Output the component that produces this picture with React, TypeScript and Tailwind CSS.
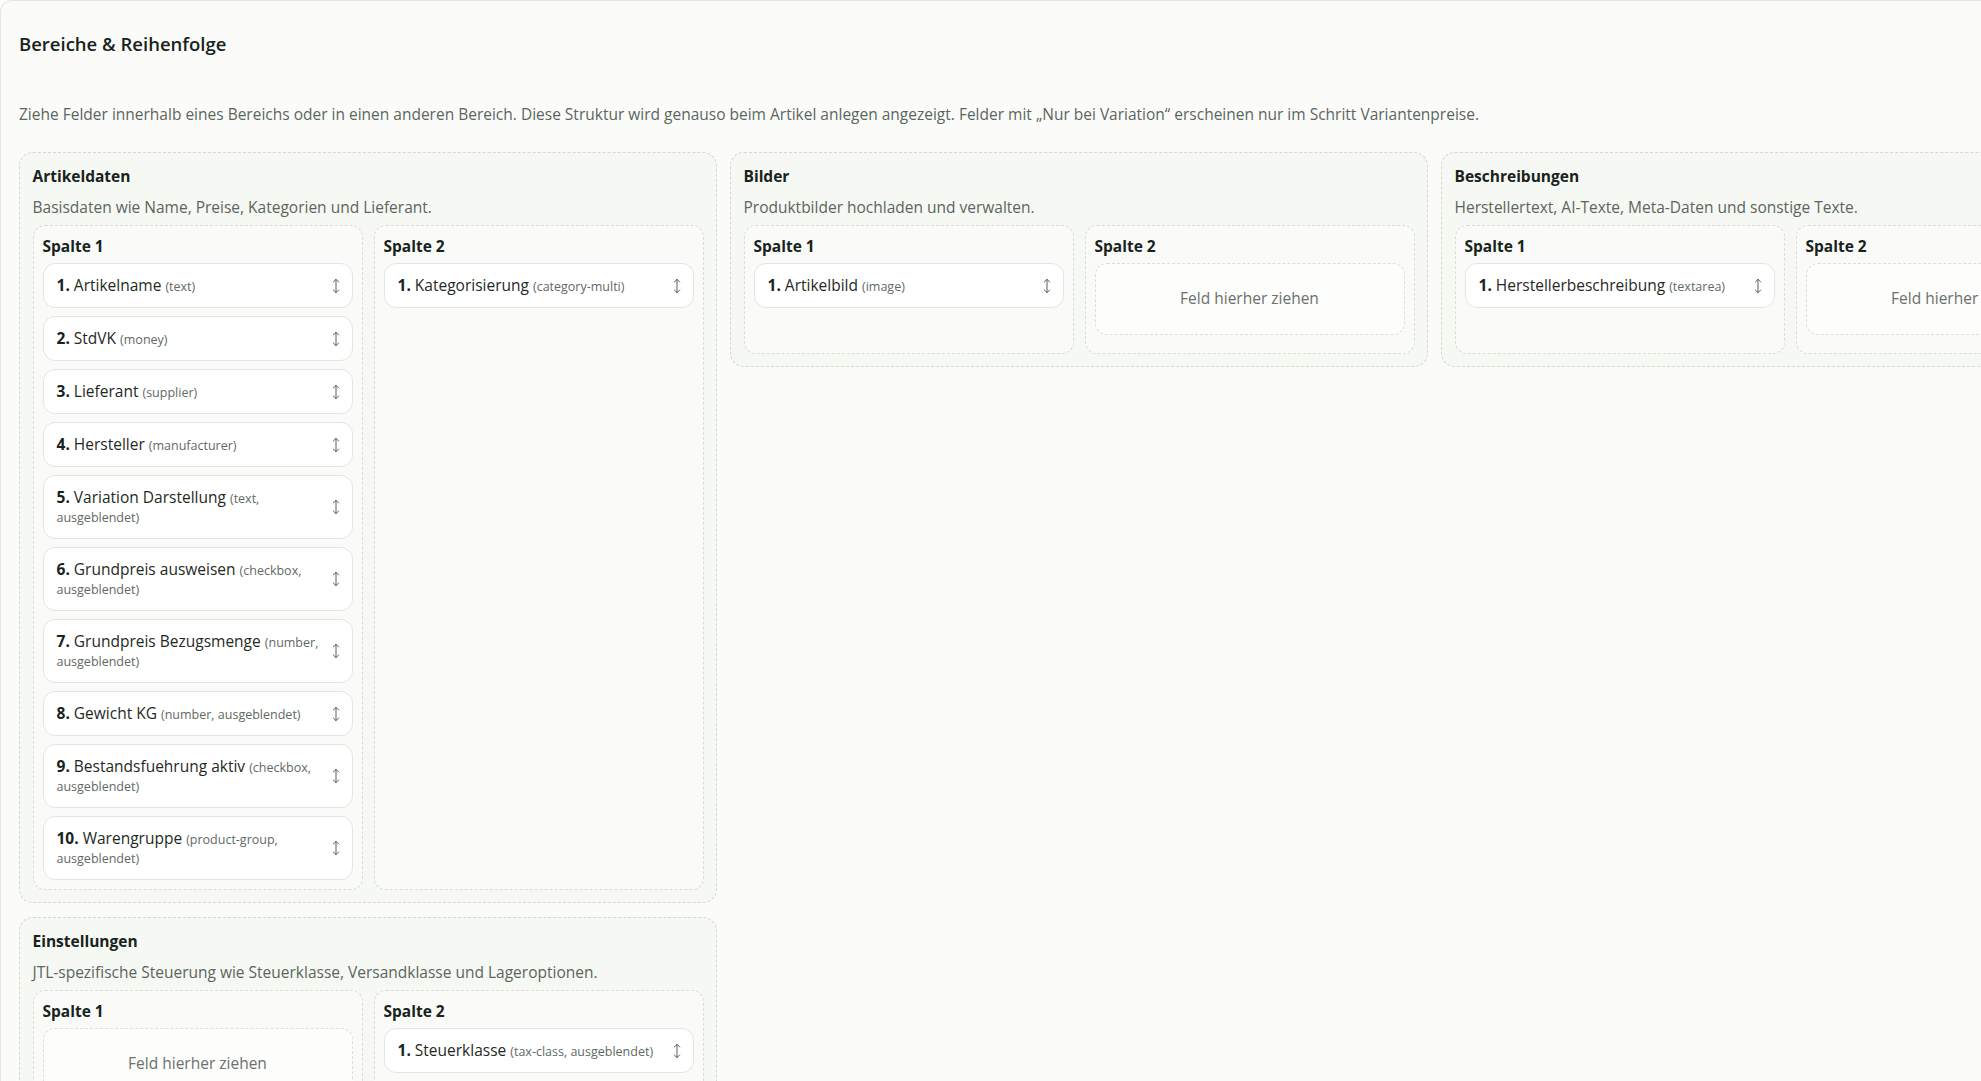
import React from "react";
import { MoveVertical } from "lucide-react";

type Field = { name: string; type: string };

const FieldItem = ({ n, f }: { n: number; f: Field }) => (
  <div className="flex items-center gap-2 rounded-[12px] border border-[#e3e6e0] bg-white pl-[13px] pr-[8px] py-[12px]">
    <div className="flex-1 text-[15.5px] leading-[19px] text-[#1f2a24]">
      <span className="font-bold text-[#17231c]">{n}.</span> {f.name}{" "}
      <span className="text-[12.5px] leading-none text-[#5f6a64]">({f.type})</span>
    </div>
    <MoveVertical size={16} strokeWidth={1.5} className="shrink-0 text-[#59605c]" />
  </div>
);

const Placeholder = () => (
  <div className="mb-[9px] flex h-[72px] items-center justify-center rounded-[12px] border border-dashed border-[#dcdfd8] bg-[#fdfdfc] text-[15.5px] text-[#6a716d]">
    Feld hierher ziehen
  </div>
);

const Column = ({ label, fields }: { label: string; fields: Field[] }) => (
  <div className="rounded-[12px] border border-dashed border-[#d9ddd4] bg-[#fafbf8] px-[9px] pt-[10px] pb-[9px]">
    <div className="mb-[7px] text-[15.5px] font-bold leading-[20px] text-[#17231c]">{label}</div>
    {fields.length === 0 ? (
      <Placeholder />
    ) : (
      <div className="flex flex-col gap-2">
        {fields.map((f, i) => (
          <FieldItem key={i} n={i + 1} f={f} />
        ))}
      </div>
    )}
  </div>
);

const Section = ({
  title,
  desc,
  col1,
  col2,
}: {
  title: string;
  desc: string;
  col1: Field[];
  col2: Field[];
}) => (
  <div className="w-[698px] rounded-[14px] border border-dashed border-[#d3d9cd] bg-[#f6f8f3] px-[12.5px] pt-[13px] pb-[12px]">
    <div className="text-[15.5px] font-bold leading-[20px] text-[#17231c]">{title}</div>
    <div className="mt-[11px] text-[15.5px] leading-[20px] text-[#5a665f]">{desc}</div>
    <div className="mt-[8px] grid grid-cols-2 gap-[11px]">
      <Column label="Spalte 1" fields={col1} />
      <Column label="Spalte 2" fields={col2} />
    </div>
  </div>
);

export default function App() {
  const artikel1: Field[] = [
    { name: "Artikelname", type: "text" },
    { name: "StdVK", type: "money" },
    { name: "Lieferant", type: "supplier" },
    { name: "Hersteller", type: "manufacturer" },
    { name: "Variation Darstellung", type: "text, ausgeblendet" },
    { name: "Grundpreis ausweisen", type: "checkbox, ausgeblendet" },
    { name: "Grundpreis Bezugsmenge", type: "number, ausgeblendet" },
    { name: "Gewicht KG", type: "number, ausgeblendet" },
    { name: "Bestandsfuehrung aktiv", type: "checkbox, ausgeblendet" },
    { name: "Warengruppe", type: "product-group, ausgeblendet" },
  ];
  return (
    <div className="h-screen w-screen overflow-hidden bg-white font-['Open_Sans','Noto_Sans',sans-serif]">
      <div className="min-h-full w-[2200px] rounded-tl-[12px] border-l border-t border-[#e4e7e1] bg-[#fbfcf9] pl-[18px] pt-[31px]">
        <h2 className="text-[18.5px] font-semibold leading-[24px] text-[#17231c]">Bereiche &amp; Reihenfolge</h2>
        <p className="mt-[48px] text-[15.5px] leading-[20px] text-[#5a665f]">
          Ziehe Felder innerhalb eines Bereichs oder in einen anderen Bereich. Diese Struktur wird genauso beim Artikel anlegen angezeigt. Felder mit „Nur bei Variation“ erscheinen nur im Schritt Variantenpreise.
        </p>
        <div className="mt-[28px] grid grid-cols-[repeat(3,698px)] items-start gap-x-[13px] gap-y-[14px]">
          <Section
            title="Artikeldaten"
            desc="Basisdaten wie Name, Preise, Kategorien und Lieferant."
            col1={artikel1}
            col2={[{ name: "Kategorisierung", type: "category-multi" }]}
          />
          <Section
            title="Bilder"
            desc="Produktbilder hochladen und verwalten."
            col1={[{ name: "Artikelbild", type: "image" }]}
            col2={[]}
          />
          <Section
            title="Beschreibungen"
            desc="Herstellertext, AI-Texte, Meta-Daten und sonstige Texte."
            col1={[{ name: "Herstellerbeschreibung", type: "textarea" }]}
            col2={[]}
          />
          <Section
            title="Einstellungen"
            desc="JTL-spezifische Steuerung wie Steuerklasse, Versandklasse und Lageroptionen."
            col1={[]}
            col2={[{ name: "Steuerklasse", type: "tax-class, ausgeblendet" }]}
          />
        </div>
      </div>
    </div>
  );
}
